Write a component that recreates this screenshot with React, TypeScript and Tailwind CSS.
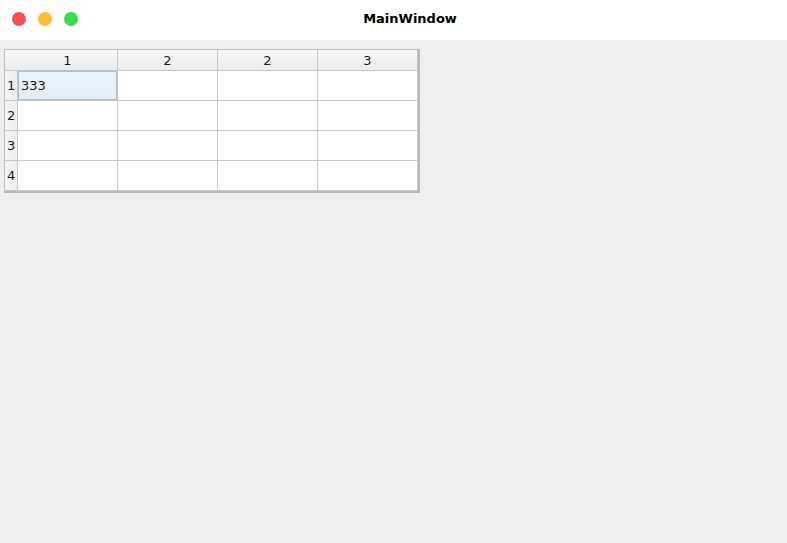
import React from "react";

const cols = ["1", "2", "2", "3"];
const rows = ["1", "2", "3", "4"];

export default function App() {
  return (
    <div
      className="w-[787px] h-[543px] bg-[#efefef] flex flex-col overflow-hidden"
      style={{ fontFamily: '"DejaVu Sans", "Noto Sans", sans-serif' }}
    >
      <div className="h-[40px] bg-white flex items-center relative shrink-0">
        <div className="flex items-center gap-[12px] pl-[12px] -mt-[2px]">
          <span className="w-[14px] h-[14px] rounded-full bg-[#f5505a]" />
          <span className="w-[14px] h-[14px] rounded-full bg-[#fdbd33]" />
          <span className="w-[14px] h-[14px] rounded-full bg-[#35de4a]" />
        </div>
        <div className="absolute inset-0 flex items-center justify-center pl-[33px] -mt-[2px] text-[13px] font-bold text-black">
          MainWindow
        </div>
      </div>
      <div className="pt-[9px] pl-[4px]">
        <div className="inline-block border border-[#bdbdbd] border-r-2 border-b-2 border-r-[#b8b8b8] border-b-[#b8b8b8] bg-white">
          <div className="grid grid-cols-[13px_repeat(4,100px)] grid-rows-[21px_repeat(4,30px)] text-[13px] text-[#1a1a1a]">
            <div className="border-b border-[#c6c6c6] bg-gradient-to-b from-[#f9f9f9] to-[#ececec]" />
            {cols.map((c, i) => (
              <div
                key={"h" + i}
                className="border-r border-b border-[#c6c6c6] bg-gradient-to-b from-[#f9f9f9] to-[#ececec] flex items-center justify-center leading-none pt-[1px]"
              >
                {c}
              </div>
            ))}
            {rows.map((r, ri) => (
              <React.Fragment key={"r" + ri}>
                <div className="border-r border-b border-[#c6c6c6] bg-gradient-to-r from-[#f6f6f6] to-[#ededed] flex items-center pl-[2px] leading-none">
                  {r}
                </div>
                {cols.map((_, ci) =>
                  ri === 0 && ci === 0 ? (
                    <div
                      key={"c" + ci}
                      className="border-r border-b border-[#c8c8c8] bg-white"
                    >
                      <div className="h-full w-full border border-[#a8c3d8] bg-gradient-to-b from-[#eaf4fc] to-[#e2eef8] flex items-center pl-[2px] leading-none">
                        333
                      </div>
                    </div>
                  ) : (
                    <div
                      key={"c" + ci}
                      className="border-r border-b border-[#cacaca] bg-white"
                    />
                  )
                )}
              </React.Fragment>
            ))}
          </div>
        </div>
      </div>
    </div>
  );
}
